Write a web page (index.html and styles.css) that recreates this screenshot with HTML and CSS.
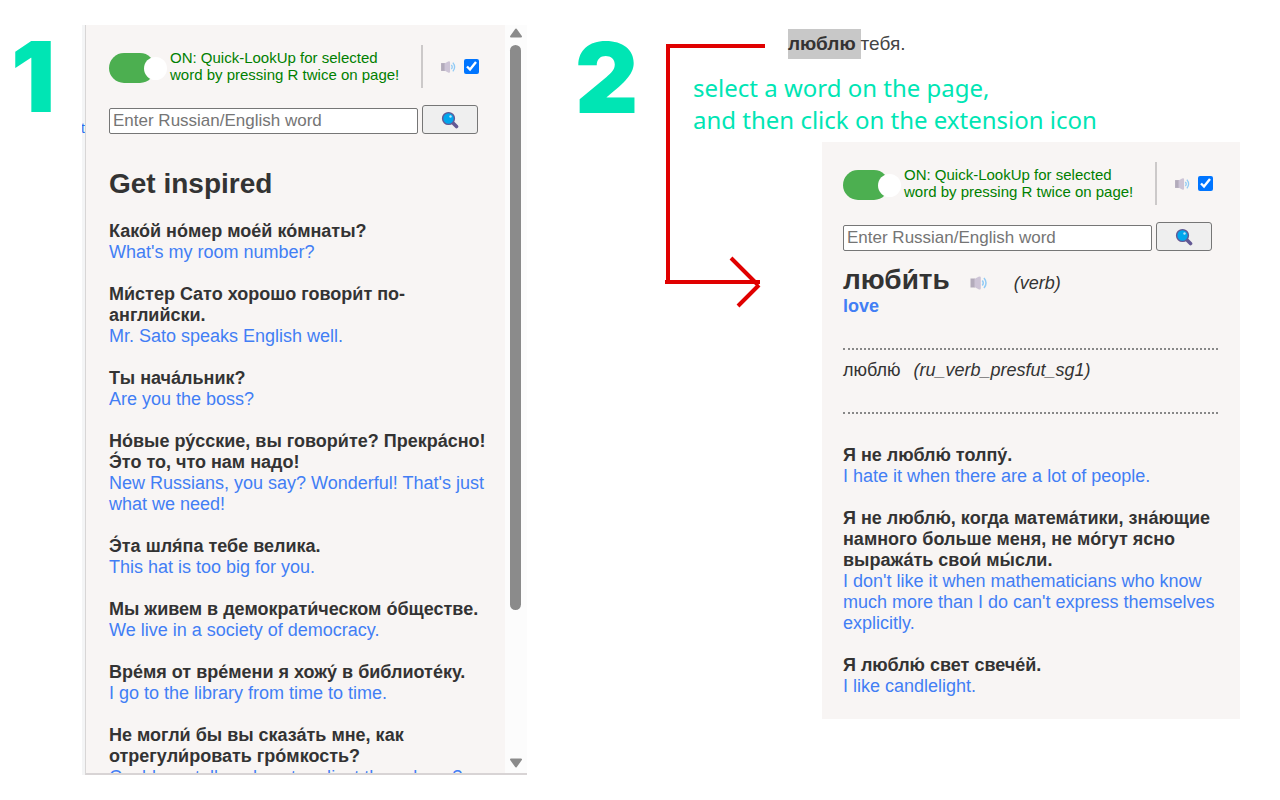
FILE: index.html
```html
<!DOCTYPE html>
<html lang="en">
<head>
<meta charset="utf-8">
<title>Russian Quick-LookUp</title>
<link rel="stylesheet" href="styles.css">
</head>
<body>
<svg class="defs" aria-hidden="true">
  <symbol id="speaker" viewBox="0 0 18 16">
    <path d="M.5 3.500h4.500v9H.5z" fill="#b3abbb"/>
    <path d="M4.500 4L8.500 1.800q2.300-1 2.300 1v10.400q0 2-2.300 1L4.500 12z" fill="#cdc4d6"/>
    <path d="M12.300 5.500q1.900 2.500 0 5M14 3q4 5 0 10" fill="none" stroke="#92cbf5" stroke-width="1.500"/>
  </symbol>
  <symbol id="lens" viewBox="0 0 18 18">
    <path d="M11 11l4.500 4.500" stroke="#635994" stroke-width="3.600" stroke-linecap="round"/>
    <circle cx="7.500" cy="7.500" r="5.900" fill="#00a6ed" stroke="#635994" stroke-width="1.400"/>
    <circle cx="9.500" cy="5.500" r="1.200" fill="#b9e6fb"/>
  </symbol>
</svg>
<main class="guide">
  <section class="step step-one">
    <div class="numeral">1</div>
    <div class="sliver" aria-hidden="true"><span class="sliver-text">t</span></div>
    <div class="window">
      <div class="popup">
        <div class="options">
          <label class="switch"><input type="checkbox" role="switch" aria-label="Quick-LookUp" checked></label>
          <p class="status">ON: Quick-LookUp for selected<br>word by pressing R twice on page!</p>
          <label class="sound"><svg class="sound-icon"><use href="#speaker"/></svg><input type="checkbox" class="tick" aria-label="Sound" checked></label>
        </div>
        <form class="search">
          <input class="query" type="text" placeholder="Enter Russian/English word" aria-label="Word">
          <button class="go" type="button" aria-label="Search"><svg class="lens"><use href="#lens"/></svg></button>
        </form>
        <h1 class="title">Get inspired</h1>
        <div class="phrases">
          <p class="phrase"><b>Како́й но́мер мое́й ко́мнаты?</b><span>What's my room number?</span></p>
          <p class="phrase"><b>Ми́стер Сато хорошо говори́т по-английски.</b><span>Mr. Sato speaks English well.</span></p>
          <p class="phrase"><b>Ты нача́льник?</b><span>Are you the boss?</span></p>
          <p class="phrase"><b>Но́вые ру́сские, вы говори́те? Прекра́сно! Э́то то, что нам надо!</b><span>New Russians, you say? Wonderful! That's just what we need!</span></p>
          <p class="phrase"><b>Э́та шля́па тебе велика.</b><span>This hat is too big for you.</span></p>
          <p class="phrase"><b>Мы живем в демократи́ческом о́бществе.</b><span>We live in a society of democracy.</span></p>
          <p class="phrase"><b>Вре́мя от вре́мени я хожу́ в библиоте́ку.</b><span>I go to the library from time to time.</span></p>
          <p class="phrase"><b>Не могли́ бы вы сказа́ть мне, как отрегули́ровать гро́мкость?</b><span>Could you tell me how to adjust the volume?</span></p>
        </div>
      </div>
      <div class="scrollbar" aria-hidden="true">
        <svg class="arrow" viewBox="0 0 14 10"><path d="M7 1.500L12 8.500H2z" fill="#8b8b8b" stroke="#8b8b8b" stroke-width="2" stroke-linejoin="round"/></svg>
        <div class="track"><div class="thumb"></div></div>
        <svg class="arrow" viewBox="0 0 14 10"><path d="M7 8.500L12 1.500H2z" fill="#8b8b8b" stroke="#8b8b8b" stroke-width="2" stroke-linejoin="round"/></svg>
      </div>
    </div>
  </section>
  <section class="step step-two">
    <div class="numeral">2</div>
    <svg class="pointer" viewBox="0 0 100 270" aria-hidden="true">
      <path d="M100 6H3V242M0 242H95M66 218L93 245M94 245L73 266" fill="none" stroke="#e00000" stroke-width="4"/>
    </svg>
    <div class="demo">
      <p class="sentence"><mark>люблю </mark>тебя.</p>
      <p class="caption">select a word on the page,<br>and then click on the extension icon</p>
      <div class="popup card">
        <div class="options">
          <label class="switch"><input type="checkbox" role="switch" aria-label="Quick-LookUp" checked></label>
          <p class="status">ON: Quick-LookUp for selected<br>word by pressing R twice on page!</p>
          <label class="sound"><svg class="sound-icon"><use href="#speaker"/></svg><input type="checkbox" class="tick" aria-label="Sound" checked></label>
        </div>
        <form class="search">
          <input class="query" type="text" placeholder="Enter Russian/English word" aria-label="Word">
          <button class="go" type="button" aria-label="Search"><svg class="lens"><use href="#lens"/></svg></button>
        </form>
        <div class="entry">
          <h2 class="headword">люби́ть</h2>
          <svg class="say"><use href="#speaker"/></svg>
          <i>(verb)</i>
        </div>
        <p class="meaning">love</p>
        <p class="form"><span>люблю́</span><i>(ru_verb_presfut_sg1)</i></p>
        <div class="phrases">
          <p class="phrase"><b>Я не люблю́ толпу́.</b><span>I hate it when there are a lot of people.</span></p>
          <p class="phrase"><b>Я не люблю́, когда матема́тики, зна́ющие намного больше меня, не мо́гут ясно выража́ть свои́ мы́сли.</b><span>I don't like it when mathematicians who know much more than I do can't express themselves explicitly.</span></p>
          <p class="phrase"><b>Я люблю́ свет свече́й.</b><span>I like candlelight.</span></p>
        </div>
      </div>
    </div>
  </section>
</main>
</body>
</html>
```
FILE: styles.css
```css
* { box-sizing: border-box; }
body {
  margin: 0;
  background: #fff;
  color: #333;
  font: 18px/21px "Liberation Sans", Arial, sans-serif;
}
p, h1, h2 { margin: 0; }
.defs { display: none; }

.guide {
  display: grid;
  grid-template-columns: 527fr 753fr;
  min-height: 100vh;
}
.step { display: flex; align-items: flex-start; position: relative; }
.numeral {
  flex: none;
  font: 900 98px/98px Inter, sans-serif;
  color: #00e5b4;
}

/* Step one: the popup inside a scrolling window */
.step-one { padding: 25px 0; }
.step-one .numeral { width: 82px; padding-left: 11px; padding-top: 3px; }
.sliver {
  align-self: stretch;
  display: flex;
  justify-content: flex-end;
  width: 3px;
  padding-top: 93px;
  overflow: hidden;
  background: #f4f5f6;
}
.sliver-text { color: #2a6ff0; font-size: 14px; }
.window {
  flex: 1;
  min-width: 0;
  height: calc(100vh - 50px);
  display: flex;
  overflow: hidden;
  border-left: 1px solid #d8d6d6;
  border-bottom: 2px solid #d8d4d5;
  background: #f8f5f4;
}
.scrollbar {
  width: 22px;
  padding: 3px 5px 5px 4px;
  display: flex;
  flex-direction: column;
  align-items: center;
  gap: 7px;
  background: #fcfcfc;
}
.arrow { flex: none; width: 14px; height: 10px; }
.track { flex: 1; width: 11px; }
.thumb { height: 80%; border-radius: 6px; background: #8b8b8b; }

/* Popup */
.popup { padding: 20px 22px 22px 21px; background: #f8f5f4; }
.window .popup { flex: 1; min-width: 0; padding-left: 23px; padding-right: 21px; }
.window .phrases { margin-right: -6px; }
.options { display: flex; height: 43px; }
.switch {
  flex: none;
  position: relative;
  width: 46px;
  height: 30px;
  margin-top: 8px;
  border-radius: 15px;
  background: #4caf50;
}
.switch input { position: absolute; opacity: 0; }
.switch::after {
  content: "";
  position: absolute;
  left: 35px;
  top: 4px;
  width: 23px;
  height: 23px;
  border-radius: 50%;
  background: #fff;
}
.status {
  margin-left: 15px;
  padding-top: 4px;
  font-size: 15px;
  line-height: 17px;
  color: #008000;
  white-space: nowrap;
}
.sound {
  display: flex;
  align-items: center;
  gap: 7px;
  margin-left: 22px;
  padding-left: 17px;
  border-left: 2px solid #ccc9c9;
}
.sound-icon { width: 17px; height: 14px; }
.tick { width: 15px; height: 15px; margin: 0; accent-color: #0075ff; }
.search { display: flex; align-items: flex-end; gap: 4px; margin-top: 17px; padding-right: 6px; }
.query {
  flex: 1;
  min-width: 0;
  height: 26px;
  padding: 0 3px;
  border: 1px solid #767676;
  border-radius: 2px;
  background: #fff;
  font: 17px "Liberation Sans", Arial, sans-serif;
}
.query::placeholder { color: #757575; }
.go {
  width: 56px;
  height: 29px;
  padding: 0;
  display: grid;
  place-items: center;
  border: 1px solid #767676;
  border-radius: 3px;
  background: #efefef;
}
.lens { width: 18px; height: 18px; }
.title { margin: 34px 0 21px; font-size: 28px; line-height: 32px; }
.phrases { display: grid; gap: 21px; }
.phrase b, .phrase span { display: block; }
.phrase span { color: #427ef5; }

/* Step two: selected word and lookup result */
.step-two { padding: 29px 40px 29px 47px; }
.step-two .numeral { width: 119px; padding-left: 1px; }
.pointer { position: absolute; left: 138px; top: 40px; width: 100px; height: 270px; }
.demo { flex: 1; min-width: 0; }
.sentence { margin-left: 95px; font-size: 19px; line-height: 30px; color: #444; }
.sentence mark {
  display: inline-block;
  padding-right: 5px;
  background: #c8c8c8;
  color: #333;
  font-weight: bold;
}
.caption {
  padding: 13px 0 6px;
  font: 24px/32px "Noto Sans", sans-serif;
  color: #00e5b4;
}
.card { margin-left: 129px; }
.entry { display: flex; align-items: center; margin-top: 13px; }
.headword { font-size: 28px; line-height: 32px; }
.say { width: 18px; height: 16px; margin: 6px 26px 0 20px; }
.entry i { padding-top: 6px; }
.meaning { padding-bottom: 31px; border-bottom: 2px dotted #888; color: #427ef5; font-weight: bold; }
.form {
  display: flex;
  gap: 13px;
  margin-bottom: 31px;
  padding: 10px 0 31px;
  border-bottom: 2px dotted #888;
}
```
